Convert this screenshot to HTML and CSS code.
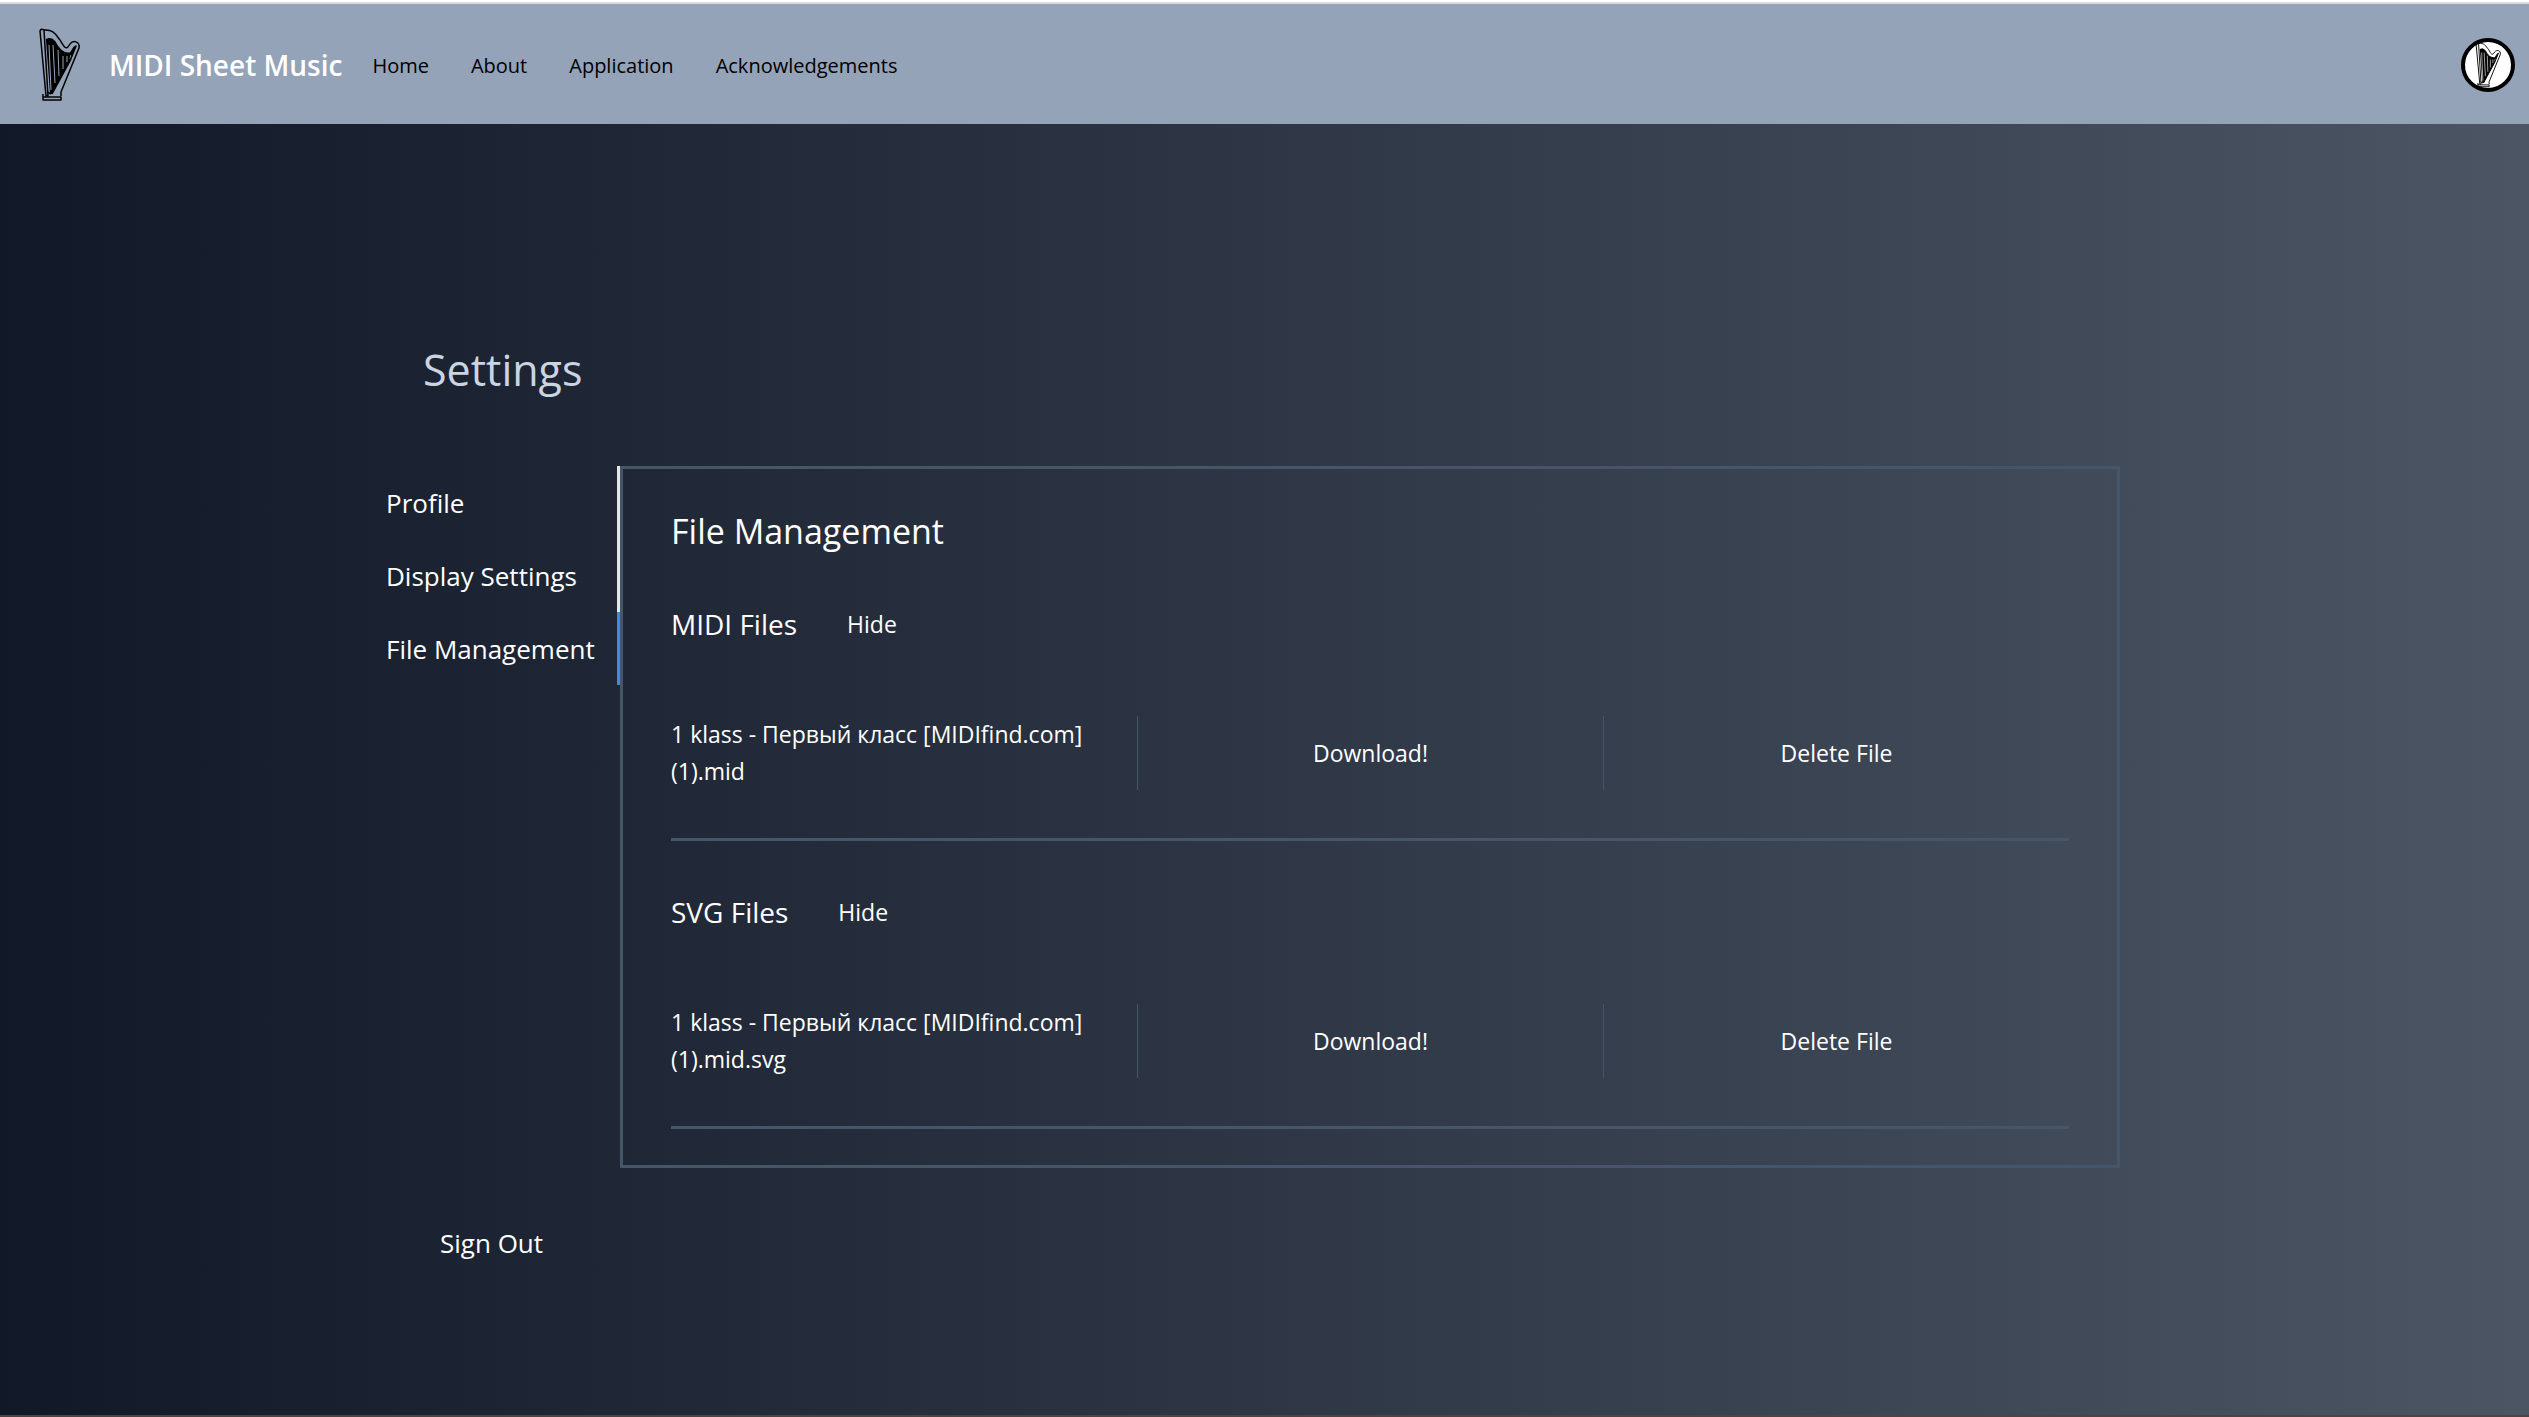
FILE: index.html
```html
<!DOCTYPE html>
<html lang="en">
<head>
<meta charset="utf-8">
<title>MIDI Sheet Music</title>
<link rel="stylesheet" href="styles.css">
</head>
<body>
<svg class="defs" aria-hidden="true">
  <symbol id="harp" viewBox="0 0 42 74">
    <path class="harp-fill" d="M7 12Q12 9 16 14C20 22 25 26 31 25L37 18L31 33L13 66L11 66Z"/>
    <path class="harp-string" d="M10 17L12 62M14 17L16 55M19 22L20 48M24 28L24 41M28 28L28 34M32 27L31 31"/>
    <path class="harp-line" d="M1 3Q2 0 5 2L9 68L7 68Z"/>
    <path class="harp-line" d="M5 2C14 1 17 7 21 12C25 19 27 23 31 16C34 12 41 13 40 20L22 64L22 68M7 12Q12 9 16 14C20 22 25 26 31 25C34 24 33 19 37 18L31 33L13 66M8 64L12 66M4 66L4 72H22V69H4"/>
  </symbol>
</svg>
<header class="navbar">
  <a class="brand" href="#"><svg class="logo" aria-hidden="true"><use href="#harp"/></svg><span>MIDI Sheet Music</span></a>
  <nav class="links">
    <a href="#">Home</a>
    <a href="#">About</a>
    <a href="#">Application</a>
    <a href="#">Acknowledgements</a>
  </nav>
  <button class="avatar" aria-label="Account"><svg class="avatar-harp" aria-hidden="true"><use href="#harp"/></svg></button>
</header>
<main class="page">
  <div class="settings">
    <h1>Settings</h1>
    <div class="layout">
      <div class="tabs">
        <button class="tab">Profile</button>
        <button class="tab">Display Settings</button>
        <button class="tab active">File Management</button>
      </div>
      <section class="panel">
        <h2>File Management</h2>
        <div class="group">
          <h3>MIDI Files</h3><button class="plain">Hide</button>
        </div>
        <div class="file">
          <p>1 klass - Первый класс [MIDIfind.com] (1).mid</p>
          <button class="plain cell">Download!</button>
          <button class="plain cell">Delete File</button>
        </div>
        <div class="group">
          <h3>SVG Files</h3><button class="plain">Hide</button>
        </div>
        <div class="file">
          <p>1 klass - Первый класс [MIDIfind.com] (1).mid.svg</p>
          <button class="plain cell">Download!</button>
          <button class="plain cell">Delete File</button>
        </div>
      </section>
    </div>
    <button class="signout">Sign Out</button>
  </div>
</main>
</body>
</html>
```
FILE: styles.css
```css
* { box-sizing: border-box; }
body {
  margin: 0;
  min-height: 100vh;
  display: flex;
  flex-direction: column;
  border-top: 2px solid #fff;
  border-bottom: 2px solid #4f433f;
  font-family: "Open Sans", "Noto Sans", sans-serif;
  font-size: 23px;
  line-height: 37px;
  color: #fff;
}
h1, h2, h3, p { margin: 0; font-weight: 400; }
a { color: inherit; text-decoration: none; }
button { margin: 0; padding: 0; border: 0; background: none; font: inherit; color: inherit; cursor: pointer; }
.defs { position: absolute; width: 0; height: 0; }
.harp-fill { fill: #000; }
.harp-string { fill: none; stroke: var(--string); stroke-width: 1; }
.harp-line { fill: none; stroke: #000; stroke-width: 1.5; stroke-linejoin: round; }

.navbar {
  display: flex;
  align-items: center;
  height: 122px;
  padding: 2px 14px 0 39px;
  border-top: 2px solid #d9dbdd;
  background: #94a3b8;
}
.brand { display: flex; align-items: center; gap: 28px; font-size: 28px; font-weight: 600; }
.logo { --string: #94a3b8; width: 42px; height: 74px; }
.links { display: flex; gap: 42px; margin-left: 30px; font-size: 20px; color: #000; }
.avatar {
  --string: #fff;
  display: flex;
  align-items: center;
  justify-content: center;
  width: 54px;
  height: 54px;
  margin-left: auto;
  border: 4px solid #000;
  border-radius: 50%;
  background: #fff;
}
.avatar-harp { width: 27px; height: 46px; }

.page { flex: 1; padding-right: 23px; background: linear-gradient(to right, #111827, #4b5563); }
.settings { width: 1734px; max-width: 100%; margin: 0 auto; padding: 210px 0 0 0; }
h1 { padding-left: 37px; font-size: 43px; line-height: 72px; color: #cbd5e1; }
.layout { display: grid; grid-template-columns: 234px 1fr; margin-top: 60px; }
.tabs { display: flex; flex-direction: column; align-items: stretch; }
.tab { height: 73px; padding-top: 2px; font-size: 26px; text-align: left; border-right: 3px solid #e5e7eb; }
.tab.active { border-color: #3b8be8; }
.panel { padding: 41px 48px 36px; border: 3px solid #475569; }
h2 { font-size: 34px; line-height: 43px; }
h3 { font-size: 28px; line-height: 44px; }
.group { display: flex; align-items: center; gap: 50px; padding: 49px 0 70px; }
.file { display: grid; grid-template-columns: repeat(3, 1fr); padding-bottom: 48px; border-bottom: 3px solid #475569; }
.cell { border-left: 1px solid #475569; }
.signout { margin: 54px 0 0 54px; font-size: 26px; line-height: 42px; }
```
